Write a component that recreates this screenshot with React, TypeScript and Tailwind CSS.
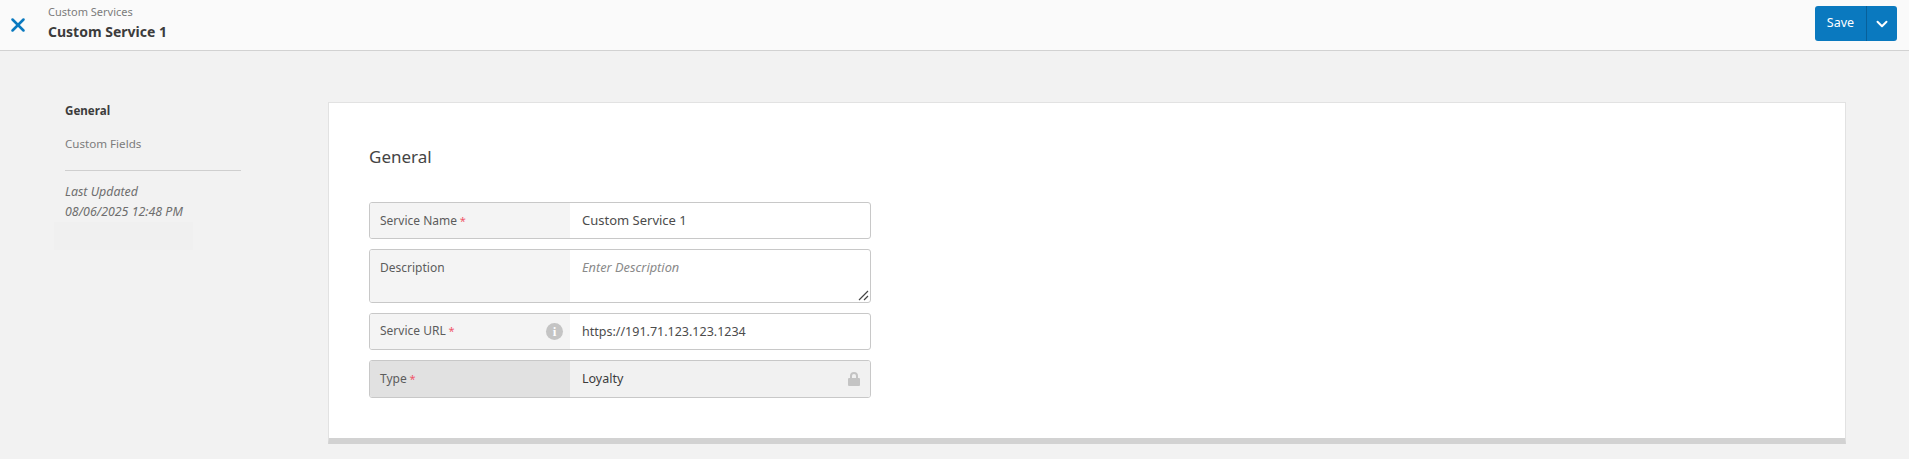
import { ChevronDown, X } from 'lucide-react';

function Req() {
  return <span className="text-[#f0566a] text-[11px]"> *</span>;
}

export default function App() {
  return (
    <div className="h-[459px] overflow-hidden bg-[#f2f2f2] font-['Noto_Sans',sans-serif] text-[#3c3c3c]">
      {/* Header */}
      <div className="h-[51px] bg-[#fafafa] border-b border-[#d2d2d2] flex items-start">
        <div className="w-[48px] h-[50px] flex items-center justify-center shrink-0">
          <X className="w-[22px] h-[22px] text-[#0a79bf] -ml-[12px]" strokeWidth={2.8} />
        </div>
        <div className="flex-1 min-w-0">
          <p className="text-[11px] leading-[14px] mt-[5px] text-[#7c7c7c]">Custom Services</p>
          <p className="text-[14px] leading-[20px] mt-[3px] font-bold">Custom Service 1</p>
        </div>
        <div className="mt-[6px] mr-[12px] h-[35px] w-[82px] flex rounded-[3px] bg-[#0a79bf] text-white">
          <span className="w-[51px] flex items-center justify-center text-[12.5px]">Save</span>
          <span className="flex-1 border-l border-[#08609a] flex items-center justify-center">
            <ChevronDown className="w-[18px] h-[18px]" strokeWidth={2.6} />
          </span>
        </div>
      </div>

      <div className="flex pt-[51px]">
        {/* Sidebar */}
        <div className="w-[328px] pl-[65px] shrink-0">
          <p className="text-[11.6px] leading-[18px] font-bold">General</p>
          <p className="text-[11.6px] leading-[18px] mt-[15px] text-[#7c7c7c]">Custom Fields</p>
          <div className="w-[176px] border-t border-[#cfcfcf] mt-[17px]" />
          <p className="text-[12.4px] leading-[20px] mt-[11px] italic text-[#6e6e6e]">
            Last Updated
            <br />
            08/06/2025 12:48 PM
          </p>
          <div className="w-[139px] h-[28px] -ml-[11px] bg-[#f0f0f0]" />
        </div>

        {/* Card */}
        <div className="w-[1518px] h-[342px] bg-white border border-[#e2e2e2] border-b-[6px] border-b-[#d2d2d2] pl-[40px] pt-[42px]">
          <h2 className="text-[17px] leading-[24px] text-[#444444]">General</h2>
          <div className="w-[502px] mt-[33px] flex flex-col gap-[10px] text-[12.5px]">
            <div className="h-[37px] flex rounded-[3px] border border-[#c8c8c8] overflow-hidden">
              <div className="w-[200px] bg-[#f4f4f4] pl-[10px] flex items-center text-[#5c5c5c] text-[12px]">
                <span>Service Name<Req /></span>
              </div>
              <div className="flex-1 pl-[12px] pt-[1px] flex items-center text-[13px] text-[#4c4c4c]">Custom Service 1</div>
            </div>

            <div className="h-[54px] flex rounded-[3px] border border-[#c8c8c8] overflow-hidden">
              <div className="w-[200px] bg-[#f4f4f4] pl-[10px] pt-[9px] text-[#5c5c5c] text-[12px]">Description</div>
              <div className="flex-1 relative pl-[12px] pt-[8px] italic text-[12.8px] text-[#8a8a8a]">
                Enter Description
                <svg className="absolute right-[1px] bottom-[1px] w-[11px] h-[11px] text-[#444444]" viewBox="0 0 11 11" fill="none" stroke="currentColor" strokeWidth="1.2">
                  <path d="M1 10L10 1M6 10L10 6" />
                </svg>
              </div>
            </div>

            <div className="h-[37px] flex rounded-[3px] border border-[#c8c8c8] overflow-hidden">
              <div className="w-[200px] bg-[#f4f4f4] pl-[10px] pr-[7px] pb-[1px] flex items-center justify-between text-[#5c5c5c] text-[12px]">
                <span>Service URL<Req /></span>
                <span className="w-[17px] h-[17px] rounded-full bg-[#c4c4c4] flex items-center justify-center">
                  <span className="text-white text-[13px] leading-none font-bold font-['Liberation_Serif',serif]">i</span>
                </span>
              </div>
              <div className="flex-1 pl-[12px] pt-[1px] flex items-center text-[#4c4c4c]">https://191.71.123.123.1234</div>
            </div>

            <div className="h-[38px] flex rounded-[3px] border border-[#c8c8c8] overflow-hidden">
              <div className="w-[200px] bg-[#e1e1e1] pl-[10px] flex items-center text-[#5c5c5c] text-[12px]">
                <span>Type<Req /></span>
              </div>
              <div className="flex-1 bg-[#f1f1f1] pl-[12px] pr-[10px] flex items-center justify-between text-[#3c3c3c]">
                Loyalty
                <svg className="w-[12px] h-[14px] text-[#c4c4c4]" viewBox="0 0 12 14" fill="currentColor">
                  <path d="M2 6V4a4 4 0 0 1 8 0v2h1a1 1 0 0 1 1 1v6a1 1 0 0 1-1 1H1a1 1 0 0 1-1-1V7a1 1 0 0 1 1-1h1Zm2 0h4V4a2 2 0 0 0-4 0v2Z" />
                </svg>
              </div>
            </div>
          </div>
        </div>
      </div>
    </div>
  );
}
